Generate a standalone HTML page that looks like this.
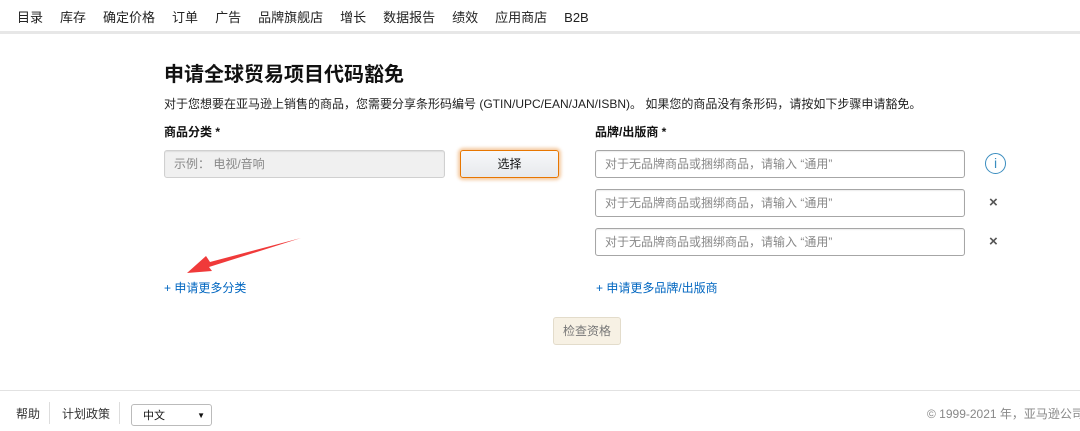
<!DOCTYPE html>
<html><head><meta charset="utf-8"><style>
*{margin:0;padding:0;box-sizing:border-box}
body{width:1080px;height:431px;overflow:hidden;background:#fff;font-family:"Liberation Sans","Noto Sans CJK SC",sans-serif;color:#111;position:relative}
.a{position:absolute;white-space:nowrap}
.nav{top:7px;left:17px;font-size:13px;color:#222}
.nav span{margin-right:17px}
.inp{position:absolute;border:1px solid #a6a6a6;border-radius:3px;height:28px;font-size:12px;color:#888;padding:0 9px;line-height:26px;box-shadow:inset 0 1px 1px rgba(0,0,0,.08)}
.x{font-size:15px;color:#555;font-weight:bold}
</style></head><body>
<div class="a nav"><span>目录</span><span>库存</span><span>确定价格</span><span>订单</span><span>广告</span><span>品牌旗舰店</span><span>增长</span><span>数据报告</span><span>绩效</span><span>应用商店</span><span>B2B</span></div>
<div class="a" style="top:31px;left:0;width:1080px;height:3px;background:#e7e7e7"></div>
<div class="a" style="top:58px;left:164px;font-size:20px;font-weight:bold">申请全球贸易项目代码豁免</div>
<div class="a" style="top:95px;left:164px;font-size:12px;color:#222">对于您想要在亚马逊上销售的商品，您需要分享条形码编号 (GTIN/UPC/EAN/JAN/ISBN)。 如果您的商品没有条形码，请按如下步骤申请豁免。</div>
<div class="a" style="top:123px;left:164px;font-size:12px;font-weight:bold">商品分类 *</div>
<div class="a" style="top:123px;left:595px;font-size:12px;font-weight:bold">品牌/出版商 *</div>
<div class="inp" style="left:164px;top:150px;width:281px;background:#f0f0f0;border-color:#d0d0d0">示例： 电视/音响</div>
<div class="a" style="left:460px;top:150px;width:99px;height:28px;border:1px solid #e77600;border-radius:3px;background:linear-gradient(#f7f8fa,#e7e9ec);box-shadow:0 0 3px 2px rgba(228,121,17,.4);text-align:center;line-height:26px;font-size:12px;color:#111">选择</div>
<div class="inp" style="left:595px;top:150px;width:370px">对于无品牌商品或捆绑商品，请输入 “通用”</div>
<div class="inp" style="left:595px;top:189px;width:370px">对于无品牌商品或捆绑商品，请输入 “通用”</div>
<div class="inp" style="left:595px;top:228px;width:370px">对于无品牌商品或捆绑商品，请输入 “通用”</div>
<div class="a" style="left:985px;top:153px;width:21px;height:21px;border:1.5px solid #3a8dbf;border-radius:50%;color:#3a8dbf;font-size:14px;text-align:center;line-height:18px;font-family:'Liberation Sans',sans-serif">i</div>
<div class="a x" style="left:989px;top:194px">×</div>
<div class="a x" style="left:989px;top:233px">×</div>
<svg class="a" style="left:0;top:0" width="1080" height="431"><polygon points="301,238 210,262 206,256 187,273 212,271 209,267" fill="#f03a3a"/></svg>
<div class="a" style="left:164px;top:279px;font-size:12px;color:#0066c0">+ 申请更多分类</div>
<div class="a" style="left:596px;top:279px;font-size:12px;color:#0066c0">+ 申请更多品牌/出版商</div>
<div class="a" style="left:553px;top:317px;width:68px;height:28px;border:1px solid #e3dccb;border-radius:3px;background:#f7f1e4;color:#777;font-size:12px;text-align:center;line-height:26px">检查资格</div>
<div class="a" style="top:390px;left:0;width:1080px;height:1px;background:#e2e2e2"></div>
<div class="a" style="top:405px;left:16px;font-size:12px;color:#333">帮助</div>
<div class="a" style="top:402px;left:49px;width:1px;height:22px;background:#ddd"></div>
<div class="a" style="top:405px;left:62px;font-size:12px;color:#333">计划政策</div>
<div class="a" style="top:402px;left:119px;width:1px;height:22px;background:#ddd"></div>
<div class="a" style="top:404px;left:131px;width:81px;height:22px;border:1px solid #bbb;border-radius:3px;font-size:11px;padding-left:11px;line-height:22px">中文<span style="position:absolute;right:6px;top:0;font-size:8px">▼</span></div>
<div class="a" style="top:405px;left:927px;font-size:12px;color:#888">© 1999-2021 年，亚马逊公司</div>
</body></html>
